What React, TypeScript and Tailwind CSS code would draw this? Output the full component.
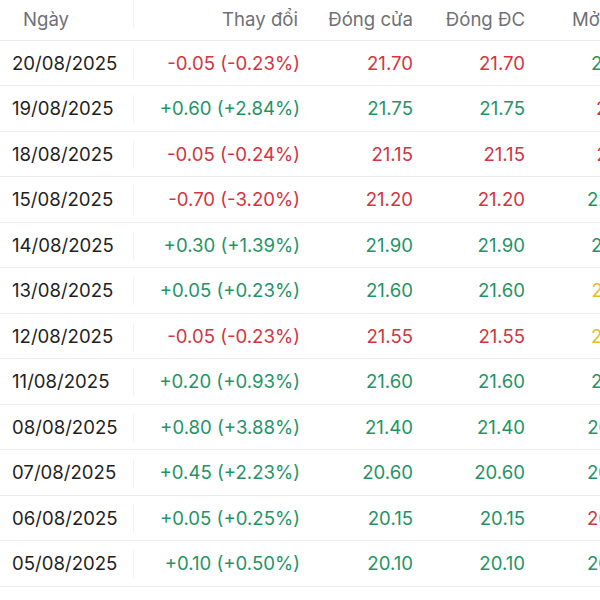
const RED = "text-[#d2353f]";
const GREEN = "text-[#1f9466]";
const YELLOW = "text-[#e8bc1c]";

type Row = {
  date: string;
  change: string;
  close: string;
  adj: string;
  open: string;
  openTone: "up" | "down" | "ref";
};

const rows: Row[] = [
  { date: "20/08/2025", change: "-0.05 (-0.23%)", close: "21.70", adj: "21.70", open: "21.80", openTone: "up" },
  { date: "19/08/2025", change: "+0.60 (+2.84%)", close: "21.75", adj: "21.75", open: "21.10", openTone: "down" },
  { date: "18/08/2025", change: "-0.05 (-0.24%)", close: "21.15", adj: "21.15", open: "21.15", openTone: "down" },
  { date: "15/08/2025", change: "-0.70 (-3.20%)", close: "21.20", adj: "21.20", open: "22.00", openTone: "up" },
  { date: "14/08/2025", change: "+0.30 (+1.39%)", close: "21.90", adj: "21.90", open: "21.30", openTone: "up" },
  { date: "13/08/2025", change: "+0.05 (+0.23%)", close: "21.60", adj: "21.60", open: "21.55", openTone: "ref" },
  { date: "12/08/2025", change: "-0.05 (-0.23%)", close: "21.55", adj: "21.55", open: "21.60", openTone: "ref" },
  { date: "11/08/2025", change: "+0.20 (+0.93%)", close: "21.60", adj: "21.60", open: "21.50", openTone: "up" },
  { date: "08/08/2025", change: "+0.80 (+3.88%)", close: "21.40", adj: "21.40", open: "20.60", openTone: "up" },
  { date: "07/08/2025", change: "+0.45 (+2.23%)", close: "20.60", adj: "20.60", open: "20.20", openTone: "up" },
  { date: "06/08/2025", change: "+0.05 (+0.25%)", close: "20.15", adj: "20.15", open: "20.00", openTone: "down" },
  { date: "05/08/2025", change: "+0.10 (+0.50%)", close: "20.10", adj: "20.10", open: "20.20", openTone: "up" },
];

function toneClass(tone: "up" | "down" | "ref") {
  if (tone === "up") return GREEN;
  if (tone === "down") return RED;
  return YELLOW;
}

export default function App() {
  return (
    <div
      className="h-[600px] w-[600px] overflow-hidden bg-white text-[18.6px] text-[#1f1f22]"
      style={{ fontFamily: "Inter, 'Liberation Sans', sans-serif" }}
    >
      {/* table is wider than the screen, last column is cut off like in the app */}
      <div className="w-[660px]">
        <div className="flex h-[40.5px] items-center border-b border-[#ececec] text-[#707075]">
          <div className="flex h-full w-[133px] shrink-0 items-center pl-[23px]">Ngày</div>
          <div className="h-[28px] w-px self-start bg-[#f2f2f2]" />
          <div className="w-[178px] shrink-0 pr-[14px] text-right">Thay đổi</div>
          <div className="w-[113px] shrink-0 pr-[12px] text-right">Đóng cửa</div>
          <div className="w-[112px] shrink-0 pr-[12px] text-right">Đóng ĐC</div>
          <div className="w-[113px] shrink-0 pl-[35px]">Mở cửa</div>
        </div>
        {rows.map((r) => {
          const tone = r.change.startsWith("-") ? RED : GREEN;
          return (
            <div
              key={r.date}
              className="flex h-[45.5px] items-center border-b border-[#ececec] pt-[2px]"
            >
              <div className="w-[133px] shrink-0 pl-[12px]">{r.date}</div>
              <div className="h-[28px] w-px bg-[#f2f2f2]" />
              <div className={`w-[178px] shrink-0 pr-[12px] text-right ${tone}`}>{r.change}</div>
              <div className={`w-[113px] shrink-0 pr-[12px] text-right ${tone}`}>{r.close}</div>
              <div className={`w-[112px] shrink-0 pr-[12px] text-right ${tone}`}>{r.adj}</div>
              <div className={`w-[113px] shrink-0 pr-[12px] text-right ${toneClass(r.openTone)}`}>{r.open}</div>
            </div>
          );
        })}
      </div>
    </div>
  );
}
